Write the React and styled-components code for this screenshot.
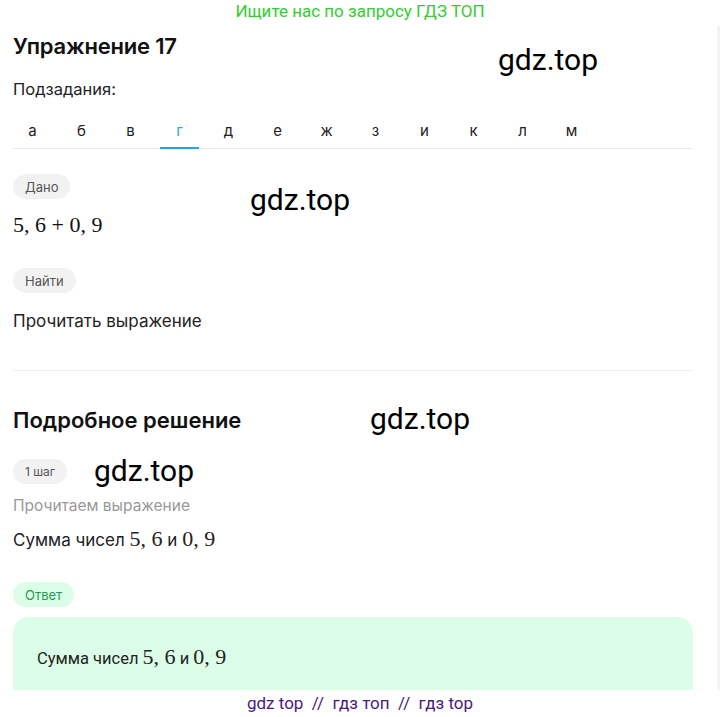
import React from "react";
import styled, { createGlobalStyle } from "styled-components";

const GlobalStyle = createGlobalStyle`
  html, body {
    margin: 0;
    padding: 0;
    background: #fff;
    font-family: Inter, Roboto, "Liberation Sans", Arial, sans-serif;
    color: #111;
  }
  body {
    height: 717px;
    overflow: hidden;
  }
`;

const tabs = ["а", "б", "в", "г", "д", "е", "ж", "з", "и", "к", "л", "м"];

function App() {
  return (
    <>
      <GlobalStyle />
      <Page>
        <Banner>Ищите нас по запросу ГДЗ ТОП</Banner>
        <Layout>
          <Main>
            <Title>Упражнение 17</Title>
            <SubLabel>Подзадания:</SubLabel>
            <Tabs>
              {tabs.map((t) => (
                <Tab key={t} active={t === "г"}>
                  {t}
                </Tab>
              ))}
            </Tabs>

            <Section>
              <Chip>Дано</Chip>
              <Math>5, 6 + 0, 9</Math>
              <Chip>Найти</Chip>
              <Text gap={16}>Прочитать выражение</Text>
            </Section>

            <Divider />

            <SolutionTitle>Подробное решение</SolutionTitle>
            <Chip small>1 шаг</Chip>
            <Hint>Прочитаем выражение</Hint>
            <Text gap={11}>
              Сумма чисел <MathInline>5, 6</MathInline> и{" "}
              <MathInline>0, 9</MathInline>
            </Text>

            <Chip green>Ответ</Chip>
            <AnswerBox>
              <AnswerText>
                Сумма чисел <MathInline>5, 6</MathInline> и{" "}
                <MathInline>0, 9</MathInline>
              </AnswerText>
            </AnswerBox>
          </Main>
          <Sidebar />
        </Layout>

        <Watermark top={42} left={498}>gdz.top</Watermark>
        <Watermark top={182} left={250}>gdz.top</Watermark>
        <Watermark top={401} left={370}>gdz.top</Watermark>
        <Watermark top={453} left={94}>gdz.top</Watermark>

        <Footer>gdz top &nbsp;//&nbsp; гдз топ &nbsp;//&nbsp; гдз top</Footer>
      </Page>
    </>
  );
}

export default App;

const Page = styled.div`
  position: relative;
  width: 720px;
  height: 717px;
  overflow: hidden;
`;

const Banner = styled.div`
  height: 24px;
  line-height: 22px;
  text-align: center;
  color: #33cc33;
  font-family: Roboto, "Liberation Sans", Arial, sans-serif;
  font-size: 17px;
`;

const Layout = styled.div`
  display: grid;
  grid-template-columns: 717px 1fr;
`;

const Main = styled.div`
  padding: 0 24px 0 13px;
  display: flex;
  flex-direction: column;
  align-items: flex-start;
`;

const Sidebar = styled.div`
  margin-top: 2px;
  height: 664px;
  background: #f3f3f3;
`;

const Title = styled.h1`
  margin: 8px 0 0;
  font-size: 22px;
  line-height: 28px;
  font-weight: 600;
  color: #111;
  letter-spacing: -0.2px;
`;

const SubLabel = styled.div`
  margin-top: 19px;
  font-size: 16.5px;
  line-height: 20px;
  color: #222;
`;

const Tabs = styled.div`
  margin-top: 12px;
  align-self: stretch;
  display: flex;
  gap: 10px;
  border-bottom: 1px solid #ebebeb;
`;

const Tab = styled.div`
  width: 39px;
  height: 38px;
  display: flex;
  align-items: center;
  justify-content: center;
  font-size: 15px;
  color: ${(p) => (p.active ? "#1ea7e4" : "#222")};
  box-shadow: ${(p) => (p.active ? "inset 0 -2px 0 #1ea7e4" : "none")};
  margin-bottom: -1px;
`;

const Section = styled.div`
  padding-top: 25px;
  display: flex;
  flex-direction: column;
  align-items: flex-start;
`;

const Chip = styled.div`
  height: 25px;
  padding: 0 12px;
  border-radius: 13px;
  display: inline-flex;
  align-items: center;
  font-size: ${(p) => (p.small ? "12px" : "13px")};
  background: ${(p) => (p.green ? "#dcfde8" : "#f2f2f2")};
  color: ${(p) => (p.green ? "#1f9a55" : "#555")};
  margin-top: ${(p) => (p.green ? "30px" : "0")};
`;

const Math = styled.div`
  margin: 12px 0 29px;
  font-family: "Liberation Serif", "DejaVu Serif", serif;
  font-size: 22px;
  line-height: 28px;
  color: #111;
`;

const MathInline = styled.span`
  font-family: "Liberation Serif", "DejaVu Serif", serif;
  font-size: 22px;
`;

const Text = styled.div`
  margin-top: ${(p) => p.gap}px;
  font-size: 17px;
  line-height: 24px;
  color: #222;
`;

const Divider = styled.div`
  align-self: stretch;
  margin-top: 37px;
  height: 1px;
  background: #efefef;
`;

const SolutionTitle = styled.h2`
  margin: 35px 0 25px;
  font-size: 22px;
  line-height: 28px;
  font-weight: 600;
  color: #111;
`;

const Hint = styled.div`
  margin-top: 12px;
  font-size: 15.5px;
  line-height: 20px;
  color: #999;
`;

const AnswerBox = styled.div`
  margin-top: 10px;
  align-self: stretch;
  height: 90px;
  border-radius: 16px;
  background: #dcfde8;
  padding: 28px 24px;
  box-sizing: border-box;
`;

const AnswerText = styled.div`
  font-family: Roboto, "Liberation Sans", Arial, sans-serif;
  font-size: 16.5px;
  line-height: 24px;
  color: #222;
`;

const Watermark = styled.div`
  position: absolute;
  top: ${(p) => p.top}px;
  left: ${(p) => p.left}px;
  font-family: Roboto, "Liberation Sans", Arial, sans-serif;
  font-size: 30px;
  line-height: 36px;
  color: #000;
`;

const Footer = styled.div`
  position: absolute;
  left: 0;
  right: 0;
  bottom: 0;
  height: 27px;
  background: #fff;
  text-align: center;
  line-height: 26px;
  font-family: Roboto, "Liberation Sans", Arial, sans-serif;
  font-size: 17px;
  color: #4b1a7e;
`;
